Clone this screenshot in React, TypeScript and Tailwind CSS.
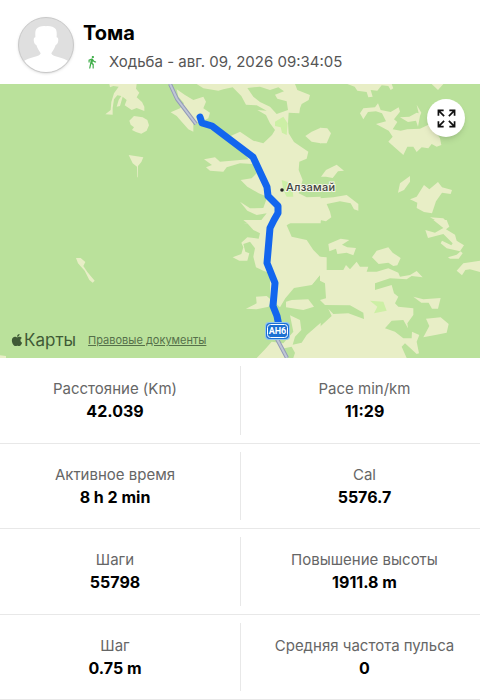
import { FaApple } from "react-icons/fa";
import { MdDirectionsWalk } from "react-icons/md";

const stats = [
  [
    { label: "Расстояние (Km)", value: "42.039" },
    { label: "Pace min/km", value: "11:29" },
  ],
  [
    { label: "Активное время", value: "8 h 2 min" },
    { label: "Cal", value: "5576.7" },
  ],
  [
    { label: "Шаги", value: "55798" },
    { label: "Повышение высоты", value: "1911.8 m" },
  ],
  [
    { label: "Шаг", value: "0.75 m" },
    { label: "Средняя частота пульса", value: "0" },
  ],
];

const Avatar = () => (
  <svg viewBox="0 0 56 56" className="size-14 rounded-full border border-[#c9c9c9] bg-[#dfdfdf] shadow">
    <path
      fill="#fff"
      d="M28 8.500c4-.5 8 .5 10 3 1.300 2 1.200 5 1 8.500 1.600.3 2 1.800 1.600 4-.4 2.200-1.200 3.500-2.600 4-.8 3-2.300 5.500-4.500 8.500.5 2 3 3 7 4 5 1.200 8.500 2.800 11.500 5C47 53 38 57 28 57S9 53 4 45.500c3-2.200 6.500-3.800 11.500-5 4-1 6.500-2 7-4-2.200-3-3.700-5.500-4.500-8.500-1.400-.5-2.200-1.800-2.600-4-.4-2.200 0-3.700 1.600-4-.2-3.500-.3-6.500 1-8.500 2-2.500 6-3.500 10-3z"
    />
  </svg>
);

const ExpandIcon = () => (
  <svg viewBox="0 0 20 20" className="size-[19px]" fill="none" stroke="#111" strokeWidth="1.8">
    <path d="M1.500 7V1.500H7M1.500 1.500l6 6" />
    <path d="M13 1.500h5.500V7M18.500 1.500l-6 6" />
    <path d="M1.500 13v5.500H7M1.500 18.500l6-6" />
    <path d="M13 18.500h5.500V13M18.500 18.500l-6-6" />
  </svg>
);

// open land is drawn in tiles of 480x420 units, 3 units per map pixel
const Land = () => (
  <g transform="scale(0.33333)" fill="#e8eec6">
    <g transform="translate(0 -12)">
      <path d="M328 12H410L408 26 418 38 410 52 426 66 433 80V93L410 84 395 90 374 76 380 60 368 50 360 78 350 80 356 60 364 48 352 46 342 58 338 84 338 104 316 103 332 90 334 66 342 40 356 20 340 18 330 22Z" />
      <path d="M388 122L402 108 428 112 442 120 447 136 440 152 424 161 408 156 396 150 402 142 392 134Z" />
      <path d="M386 225L430 232 424 246 414 258 413 292 411 292 411 260 398 250Z" />
    </g>
    <g transform="translate(480 -12)">
      <path d="M50 28L75 45 100 60 130 50 138 65 130 85 150 98 145 115 125 125 100 130 100 155 85 148 65 125 50 108 32 97 60 85 72 70 55 50Z" />
      <path d="M110 12H405L412 30 450 45 446 60 425 72 420 85 418 100 386 98 384 130 386 160 402 186 445 215 440 236 418 245 416 270 428 300 416 340 440 352 482 350V430H250L300 425 320 400 290 405 262 392 240 365 270 385 310 384 322 350 296 340 262 320 242 300 275 295 290 280 278 252 240 250 200 262 190 275 150 272 138 262 156 255 132 238 165 232 180 245 265 238 240 195 212 168 240 155 280 182 310 190 336 165 345 150 330 130 318 105 292 90 320 92 290 76 258 74 244 48 218 22 190 28 175 32 130 25Z" />
      <path fill="#bae19b" d="M262 24L300 20 330 30 355 22 372 34 345 44 352 56 380 64 384 90 350 102 330 80 300 66 280 50Z" />
      <path d="M436 168L455 155 482 143V190L455 185Z" />
      <path fill="#ccefa5" d="M345 125L370 110 383 130 380 165 366 158 362 142 345 138Z" />
      <path fill="#ccefa5" d="M365 300L395 310 400 350 380 350 370 330Z" />
    </g>
    <g transform="translate(960 -12)">
      <path d="M82 12H215L220 25 212 30 205 18 185 16 172 32 152 30 158 50 145 52 140 36 112 32 104 20Z" />
      <path d="M335 12H370L354 30Z" />
      <path d="M120 100L130 85 165 82 174 70 182 90 212 96 236 82 240 95 222 118 232 126 218 148 242 152 262 148 300 146 330 132 360 175 364 195 350 200 335 192 325 205 305 202 290 216 280 200 262 200 250 225 205 185 218 170 206 152 168 132 198 124 186 100 168 94 144 96 130 118Z" />
      <path d="M240 112L268 110 290 98 296 100 290 74 304 98 300 108 294 140 288 122 264 126Z" />
      <path d="M0 143L22 145 33 160 20 190 0 190Z" />
      <path d="M3 290L18 270 50 254 72 272 54 274 38 294 18 290Z" />
      <path d="M270 288L270 305 252 330 234 338 240 310Z" />
      <path d="M270 358L290 350 312 315 328 328 354 306 366 322 396 330 392 342 366 338 348 364 336 400 312 396 290 384 292 368Z" />
      <path d="M0 355L40 352 80 345 115 372 115 392 102 388 92 370 60 364 20 372 30 395 34 412 18 424 0 420Z" />
      <path d="M330 412L370 415 375 420H345Z" />
    </g>
    <g transform="translate(0 408)">
      <path d="M228 114L242 114 256 126 250 138 262 156 284 182 278 188 268 180 254 152 234 130Z" />
      <path d="M0 406L18 408V414H0Z" />
    </g>
    <g transform="translate(480 408)">
      <path d="M250 0H482V4L440 8 400 4 380 16 395 50 440 60 460 90 480 110H482V162L455 195 402 204 376 235 360 262 330 235 330 160 310 152 288 142 280 110 285 85 270 65 250 72 256 95 268 100 262 122 238 122 218 112 244 102 250 82 244 68 262 52 296 56 300 40 280 30 262 10Z" />
      <path d="M480 110L455 160V195L480 165Z" />
      <path d="M258 266L290 250 288 230 320 228 334 240 326 260 290 268Z" />
      <path d="M378 245L395 240 445 238 462 260 430 270 378 262Z" />
      <path d="M390 286L420 300 424 330 405 350 398 374 425 368 440 345 482 308V414H290L318 385 335 365 370 370 400 335Z" />
      <path fill="#bae19b" d="M366 386L395 380 405 398 400 414H378Z" />
    </g>
    <g transform="translate(960 408)">
      <path d="M0 110L20 112 20 150 70 150 78 135 90 148 110 125 120 140 145 140 140 155 170 155 205 145 235 158 240 170 270 165 290 153 308 172 275 168 260 178 210 175 165 190 165 210 215 195 222 220 235 230 225 250 235 260 280 265 280 285 262 310 264 325 250 300 215 302 195 325 225 335 250 355 275 355 276 335 298 345 290 365 297 400 290 402 255 370 245 380 260 414H0V320L35 288 25 266 40 282 85 280 132 297 130 278 90 256 15 255 0 240 18 235 15 190 0 182Z" />
      <path d="M25 72L62 56 88 60 66 74 82 82 108 84 100 106 80 98 52 102 48 86 28 94Z" />
      <path d="M156 112L170 92 205 82 218 98 242 114 232 136 220 138 205 128 176 132Z" />
      <path d="M340 0H380L388 20 378 28 405 44 410 62 432 76 420 94 380 85 362 70 366 62 394 76 398 70 370 42 324 54 316 30 345 38 370 24Z" />
      <path d="M384 112L410 104 422 94 428 100 416 116 390 116Z" />
      <path d="M410 152L430 130 480 122V156L450 148 436 150 426 166Z" />
      <path d="M280 230L310 238 362 234 354 266 336 266 326 248 304 248Z" />
      <path d="M318 296L362 292 386 312 380 338 350 344 310 352 328 318Z" />
      <path fill="#ccefa5" d="M150 242L190 245 200 272 162 280 172 260Z" />
    </g>
  </g>
);

const RouteMap = () => (
  <section className="relative h-[274px] overflow-hidden bg-[#bae19b]">
    <svg
      viewBox="0 0 480 274"
      preserveAspectRatio="xMidYMid slice"
      className="block size-full"
      role="img"
      aria-label="Алзамай"
    >
      <Land />
      <g fill="none" strokeLinejoin="round">
        <path d="M170 0L177 15 196 40M277 255L287 274" stroke="#949bb8" strokeWidth="4" />
        <path d="M170 0L177 15 196 40M277 255L287 274" stroke="#bfc6d6" strokeWidth="2" />
        <path
          d="M200 33L202 39 212 42 253 73 267 103 268 112 278 122 278 129 274 136 270 144 267 179 275 199 273 222 277 232 279 242"
          stroke="#1266ee"
          strokeWidth="7"
          strokeLinecap="round"
        />
      </g>
      <circle cx="282" cy="106" r="1.800" fill="#222" />
      <text
        x="286"
        y="107"
        className="font-['Inter'] text-[11px] font-medium tracking-wide"
        fill="#3f4340"
        stroke="#f3f6e6"
        strokeWidth="2"
        paintOrder="stroke"
      >
        Алзамай
      </text>
      <rect x="265" y="238" width="25" height="18" rx="4" fill="#8fc4f0" />
      <rect x="266" y="239" width="23" height="16" rx="4" fill="#1c70d2" />
      <rect x="267.500" y="240.500" width="20" height="13" rx="3" fill="#1c70d2" stroke="#fff" />
      <text
        x="277.500"
        y="250"
        textAnchor="middle"
        className="font-['Roboto'] text-[9px] font-bold"
        fill="#fff"
      >
        AH6
      </text>
    </svg>
    <button
      aria-label="На весь экран"
      className="absolute right-[15px] top-[15px] flex size-[38px] items-center justify-center rounded-full bg-white shadow-md"
    >
      <ExpandIcon />
    </button>
    <div className="absolute bottom-2 left-2.5 flex items-center text-[#3f5a36]">
      <FaApple className="size-[14px]" />
      <span className="text-[17px] leading-5">Карты</span>
      <a href="#" className="ml-3 text-[11px] leading-4 text-[#55704a] underline">
        Правовые документы
      </a>
    </div>
  </section>
);

const App = () => {
  return (
    <main className="flex min-h-screen flex-col bg-white font-['Inter',sans-serif]">
      <header className="flex h-[84px] items-center gap-2 pl-[18px] pt-1.5">
        <Avatar />
        <div className="pl-px pt-1.5">
          <h1 className="text-xl font-bold leading-7 text-black">Тома</h1>
          <p className="flex items-center pl-0.5 text-[15px] leading-[30px] text-[#555]">
            <MdDirectionsWalk className="mr-2.5 size-3.5 text-[#3fae49]" />
            Ходьба - авг. 09, 2026 09:34:05
          </p>
        </div>
      </header>
      <RouteMap />
      <dl className="flex flex-1 flex-col">
        {stats.map((row, index) => (
          <div key={index} className="grid min-h-20 flex-1 grid-cols-2 border-b border-[#e8e8e8] py-2">
            {row.map((item) => (
              <div
                key={item.label}
                className="flex flex-col items-center justify-center text-center odd:pr-2.5 even:border-l even:border-[#e8e8e8] even:pl-2"
              >
                <dt className="text-[15px] leading-[22px] text-[#666]">{item.label}</dt>
                <dd className="text-base font-bold leading-[22px] text-black">{item.value}</dd>
              </div>
            ))}
          </div>
        ))}
      </dl>
    </main>
  );
};

export default App;
